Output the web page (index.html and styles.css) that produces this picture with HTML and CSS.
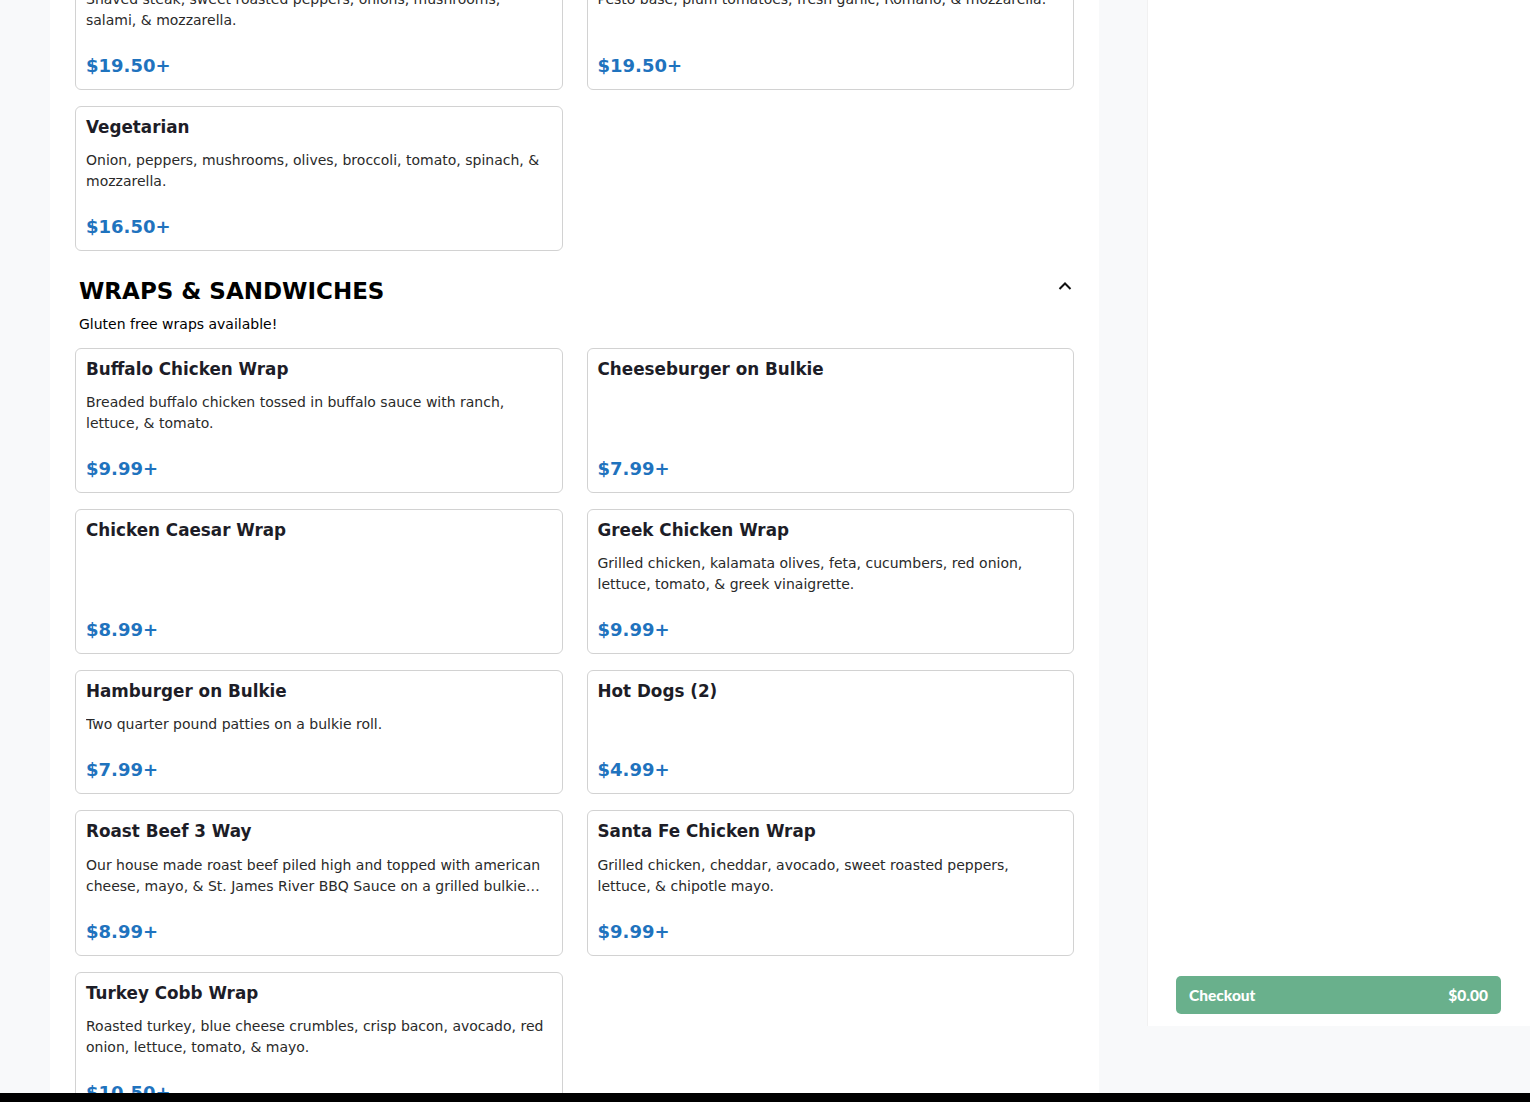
FILE: index.html
```html
<!DOCTYPE html>
<html lang="en">
<head>
<meta charset="utf-8">
<title>Menu</title>
<link rel="stylesheet" href="styles.css">
</head>
<body>
<div class="layout">
  <main class="menu">
    <section class="section section-first">
      <div class="grid">
        <article class="card">
          <h3 class="card-title">Steak Bomb</h3>
          <p class="card-desc">Shaved steak, sweet roasted peppers, onions, mushrooms, salami, &amp; mozzarella.</p>
          <div class="card-price">$19.50+</div>
        </article>
        <article class="card">
          <h3 class="card-title">Pesto Margherita</h3>
          <p class="card-desc">Pesto base, plum tomatoes, fresh garlic, Romano, &amp; mozzarella.</p>
          <div class="card-price">$19.50+</div>
        </article>
        <article class="card">
          <h3 class="card-title">Vegetarian</h3>
          <p class="card-desc">Onion, peppers, mushrooms, olives, broccoli, tomato, spinach, &amp; mozzarella.</p>
          <div class="card-price">$16.50+</div>
        </article>
      </div>
    </section>

    <section class="section">
      <div class="section-head">
        <h2 class="section-title">Wraps &amp; Sandwiches</h2>
        <button class="collapse" aria-label="Collapse">
          <svg width="14" height="10" viewBox="0 0 14 10"><path d="M1.5 8 L7 2.5 L12.5 8" fill="none" stroke="#111" stroke-width="2"/></svg>
        </button>
      </div>
      <p class="section-sub">Gluten free wraps available!</p>
      <div class="grid">
        <article class="card">
          <h3 class="card-title">Buffalo Chicken Wrap</h3>
          <p class="card-desc">Breaded buffalo chicken tossed in buffalo sauce with ranch, lettuce, &amp; tomato.</p>
          <div class="card-price">$9.99+</div>
        </article>
        <article class="card">
          <h3 class="card-title">Cheeseburger on Bulkie</h3>
          <div class="card-price">$7.99+</div>
        </article>
        <article class="card">
          <h3 class="card-title">Chicken Caesar Wrap</h3>
          <div class="card-price">$8.99+</div>
        </article>
        <article class="card">
          <h3 class="card-title">Greek Chicken Wrap</h3>
          <p class="card-desc">Grilled chicken, kalamata olives, feta, cucumbers, red onion, lettuce, tomato, &amp; greek vinaigrette.</p>
          <div class="card-price">$9.99+</div>
        </article>
        <article class="card">
          <h3 class="card-title">Hamburger on Bulkie</h3>
          <p class="card-desc">Two quarter pound patties on a bulkie roll.</p>
          <div class="card-price">$7.99+</div>
        </article>
        <article class="card">
          <h3 class="card-title">Hot Dogs (2)</h3>
          <div class="card-price">$4.99+</div>
        </article>
        <article class="card">
          <h3 class="card-title">Roast Beef 3 Way</h3>
          <p class="card-desc">Our house made roast beef piled high and topped with american cheese, mayo, &amp; St. James River BBQ Sauce on a grilled bulkie roll.</p>
          <div class="card-price">$8.99+</div>
        </article>
        <article class="card">
          <h3 class="card-title">Santa Fe Chicken Wrap</h3>
          <p class="card-desc">Grilled chicken, cheddar, avocado, sweet roasted peppers, lettuce, &amp; chipotle mayo.</p>
          <div class="card-price">$9.99+</div>
        </article>
        <article class="card">
          <h3 class="card-title">Turkey Cobb Wrap</h3>
          <p class="card-desc">Roasted turkey, blue cheese crumbles, crisp bacon, avocado, red onion, lettuce, tomato, &amp; mayo.</p>
          <div class="card-price">$10.50+</div>
        </article>
      </div>
    </section>
  </main>

  <aside class="sidebar">
    <button class="checkout">
      <span>Checkout</span>
      <span>$0.00</span>
    </button>
  </aside>
</div>
<div class="bottom-bar"></div>
</body>
</html>
```

FILE: styles.css
```css
* { box-sizing: border-box; }

html, body {
  margin: 0;
  padding: 0;
}

body {
  background: #f8f9fa;
  font-family: "DejaVu Sans", Verdana, sans-serif;
  color: #1d1d27;
  overflow: hidden;
}

.layout {
  display: flex;
  align-items: flex-start;
  padding-left: 50px;
  gap: 48px;
}

.menu {
  width: 1049px;
  flex: none;
  background: #ffffff;
  padding: 0 25px 40px;
  min-height: 1102px;
}

.section {
  margin-top: 27px;
}

.section-first {
  margin-top: -55px;
}

.grid {
  display: grid;
  grid-template-columns: 1fr 1fr;
  column-gap: 24px;
  row-gap: 16px;
}

.card {
  display: flex;
  flex-direction: column;
  border: 1px solid #d2d2d2;
  border-radius: 6px;
  padding: 10px;
  background: #fff;
}

.card-title {
  margin: 0 0 13px;
  font-size: 16.8px;
  line-height: 1.2;
  font-weight: bold;
  color: #1d1d27;
}

.card-desc {
  margin: 0 0 21px;
  font-size: 14px;
  line-height: 21px;
  color: #2a2a2a;
  display: -webkit-box;
  -webkit-line-clamp: 2;
  -webkit-box-orient: vertical;
  overflow: hidden;
}

.card-price {
  margin-top: auto;
  font-size: 18px;
  line-height: 27px;
  font-weight: bold;
  color: #1f73be;
}

.section-head {
  display: flex;
  justify-content: space-between;
  align-items: flex-start;
  padding: 0 1px 0 4px;
}

.section-title {
  margin: 0;
  font-size: 23px;
  line-height: 1.2;
  font-weight: bold;
  text-transform: uppercase;
  color: #000;
}

.collapse {
  border: 0;
  background: none;
  padding: 0;
  margin-top: 2px;
  width: 16px;
  height: 12px;
  display: flex;
  align-items: center;
  justify-content: center;
}

.section-sub {
  margin: 8px 4px 13px;
  font-size: 14px;
  line-height: 21px;
  color: #000;
}

.sidebar {
  flex: none;
  width: 383px;
  height: 1026px;
  background: #ffffff;
  border-left: 1px solid #f1f1f1;
  display: flex;
  flex-direction: column;
  justify-content: flex-end;
  padding: 0 29px 12px 28px;
}

.checkout {
  display: flex;
  justify-content: space-between;
  align-items: center;
  width: 100%;
  height: 38px;
  padding: 0 13px;
  border: 0;
  border-radius: 5px;
  background: #69b08c;
  color: #ffffff;
  font-family: "Lato", "Open Sans", sans-serif;
  font-weight: 900;
  font-size: 15.5px;
}

.bottom-bar {
  position: fixed;
  left: 0;
  right: 0;
  bottom: 0;
  height: 9px;
  background: #000;
}
```
